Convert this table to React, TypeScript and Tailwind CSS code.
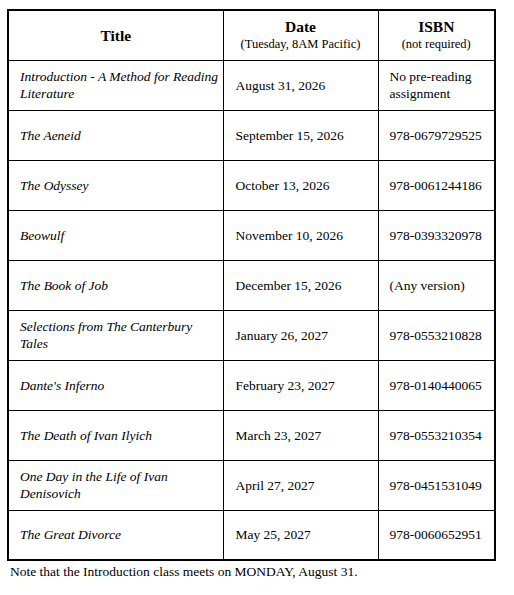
const rows = [
  { title: 'Introduction - A Method for Reading Literature', date: 'August 31, 2026', isbn: 'No pre-reading assignment' },
  { title: 'The Aeneid', date: 'September 15, 2026', isbn: '978-0679729525' },
  { title: 'The Odyssey', date: 'October 13, 2026', isbn: '978-0061244186' },
  { title: 'Beowulf', date: 'November 10, 2026', isbn: '978-0393320978' },
  { title: 'The Book of Job', date: 'December 15, 2026', isbn: '(Any version)' },
  { title: 'Selections from The Canterbury Tales', date: 'January 26, 2027', isbn: '978-0553210828' },
  { title: "Dante's Inferno", date: 'February 23, 2027', isbn: '978-0140440065' },
  { title: 'The Death of Ivan Ilyich', date: 'March 23, 2027', isbn: '978-0553210354' },
  { title: 'One Day in the Life of Ivan Denisovich', date: 'April 27, 2027', isbn: '978-0451531049' },
  { title: 'The Great Divorce', date: 'May 25, 2027', isbn: '978-0060652951' },
];

export default function App() {
  return (
    <div className="min-h-screen bg-white pl-[7px] pt-[9px] text-black font-['Liberation_Serif',_serif]">
      <table className="w-[487px] table-fixed border-collapse border-2 border-black text-[13.5px] leading-[17px]">
        <colgroup>
          <col className="w-[215px]" />
          <col className="w-[155px]" />
          <col className="w-[117px]" />
        </colgroup>
        <thead>
          <tr className="h-[50px]">
            <th className="border border-black text-center align-middle text-[15.5px] font-bold">Title</th>
            <th className="border border-black text-center align-middle">
              <div className="text-[15.5px] font-bold leading-[18px]">Date</div>
              <div className="text-[12.5px] font-normal leading-[16px]">(Tuesday, 8AM Pacific)</div>
            </th>
            <th className="border border-black text-center align-middle">
              <div className="text-[15.5px] font-bold leading-[18px]">ISBN</div>
              <div className="text-[12.5px] font-normal leading-[16px]">(not required)</div>
            </th>
          </tr>
        </thead>
        <tbody>
          {rows.map((r, i) => (
            <tr key={i} className="h-[50px]">
              <td className="border border-black pl-[11px] pr-1 align-middle italic">{r.title}</td>
              <td className="border border-black pl-[12px] pr-2 align-middle">{r.date}</td>
              <td className="border border-black pl-[11px] pr-1 align-middle">{r.isbn}</td>
            </tr>
          ))}
        </tbody>
      </table>
      <p className="mt-[2px] pl-[3px] text-[13.5px] leading-[17px]">
        Note that the Introduction class meets on MONDAY, August 31.
      </p>
    </div>
  );
}
